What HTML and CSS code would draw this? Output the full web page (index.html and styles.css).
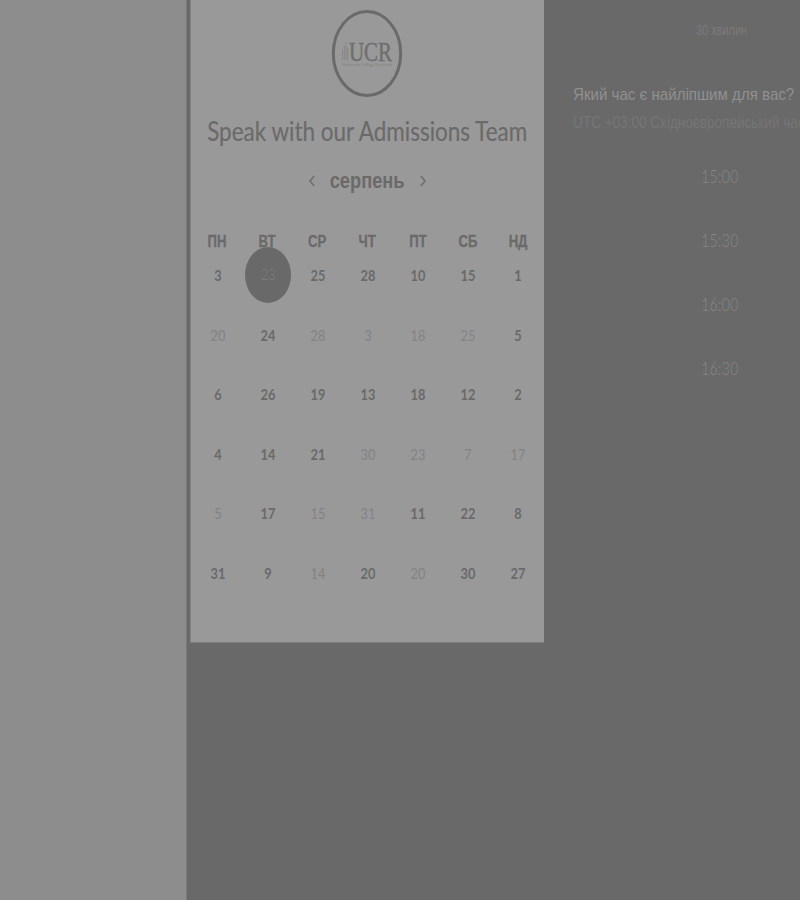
FILE: index.html
```html
<!DOCTYPE html>
<html lang="uk">
<head>
<meta charset="utf-8">
<title>Speak with our Admissions Team</title>
<link rel="stylesheet" href="styles.css">
</head>
<body>
<div class="page">
  <aside class="side"></aside>
  <main class="card">
    <svg class="logo" viewBox="0 0 72 88" width="72" height="88">
      <ellipse cx="36" cy="43.6" rx="33.7" ry="42" fill="none" stroke="#6a6a6a" stroke-width="3"/>
      <path d="M11.5 50V40M13.3 50V36M15 50V32M16.8 50V38" stroke="#868686" stroke-width="1"/>
      <text class="logo-name" x="18" y="50.5" textLength="43" lengthAdjust="spacingAndGlyphs">UCR</text>
      <text class="logo-sub" x="11" y="56" textLength="50" lengthAdjust="spacingAndGlyphs">University College Roosevelt</text>
    </svg>
    <h1 class="title"><span>Speak with our Admissions Team</span></h1>
    <div class="month">
      <svg class="arrow" viewBox="0 0 8 12" width="8" height="12"><path d="M6.2 1L2 6l4.2 5"/></svg>
      <span class="month-name"><span>серпень</span></span>
      <svg class="arrow" viewBox="0 0 8 12" width="8" height="12"><path d="M1.8 1L6 6l-4.2 5"/></svg>
    </div>
    <div class="week">
      <span>ПН</span><span>ВТ</span><span>СР</span><span>ЧТ</span><span>ПТ</span><span>СБ</span><span>НД</span>
    </div>
    <div class="days">
      <span>3</span><b class="picked"><span>23</span></b><span>25</span><span>28</span><span>10</span><span>15</span><span>1</span>
      <span class="off">20</span><span>24</span><span class="off">28</span><span class="off">3</span><span class="off">18</span><span class="off">25</span><span>5</span>
      <span>6</span><span>26</span><span>19</span><span>13</span><span>18</span><span>12</span><span>2</span>
      <span>4</span><span>14</span><span>21</span><span class="off">30</span><span class="off">23</span><span class="off">7</span><span class="off">17</span>
      <span class="off">5</span><span>17</span><span class="off">15</span><span class="off">31</span><span>11</span><span>22</span><span>8</span>
      <span>31</span><span>9</span><span class="off">14</span><span>20</span><span class="off">20</span><span>30</span><span>27</span>
    </div>
  </main>
  <section class="times">
    <p class="duration"><span>30 хвилин</span></p>
    <h2 class="question"><span>Який час є найліпшим для вас?</span></h2>
    <p class="zone"><span>UTC +03:00 Східноєвропейський час</span></p>
    <div class="slots">
      <span>15:00</span><span>15:30</span><span>16:00</span><span>16:30</span>
    </div>
  </section>
</div>
</body>
</html>
```
FILE: styles.css
```css
* { box-sizing: border-box; }
body { margin: 0; background: #696969; font-family: Lato, "Liberation Sans", sans-serif; }
h1, h2, p { margin: 0; font-weight: 400; }
.page { display: flex; width: 800px; height: 900px; overflow: hidden; }
.side { flex: none; width: 187px; background: #8d8d8d; border-right: 1px solid #7a7a7a; }
.card {
  flex: none; width: 354px; height: 643px; margin-left: 3px; margin-right: 0;
  background: #999; border-left: 1px solid #858585; border-bottom: 1px solid #7e7e7e;
  display: flex; flex-direction: column; align-items: center; color: #6a6a6a;
}
.logo { flex: none; margin: 10px 1.5px 0 0; }
.logo-name { font: 27px "Liberation Serif", serif; fill: #6e6e6e; stroke: #6e6e6e; stroke-width: .4; }
.logo-sub { font: 4px "Liberation Serif", serif; fill: #7c7c7c; }
.title { flex: none; height: 36px; margin-top: 15px; font-size: 26px; line-height: 36px; white-space: nowrap; -webkit-text-stroke: .15px #6a6a6a; }
.title span { display: inline-block; transform: scaleX(.864); }
.month { flex: none; display: flex; align-items: center; justify-content: space-between; width: 119px; height: 32px; margin-top: 16px; }
.arrow { fill: none; stroke: #707070; stroke-width: 1.7; }
.month-name { display: flex; justify-content: center; width: 76px; font: bold 22px/34px "Liberation Sans", sans-serif; }
.month-name span { transform: scaleX(.83); }
.week, .days { display: grid; grid-template-columns: repeat(7, 50.1px); flex: none; text-align: center; }
.week { height: 20px; margin-top: 35px; font: bold 16px/20px "Liberation Sans", sans-serif; -webkit-text-stroke: .3px #6a6a6a; }
.week span { transform: scaleX(.82); }
.days > span { transform: scaleX(.8); }
.days { grid-auto-rows: 59.6px; margin-left: 1.4px; font-weight: 700; font-size: 16px; line-height: 46.5px; }
.days .off { color: #838383; font-weight: 400; }
.picked {
  justify-self: center; width: 46px; height: 56px; margin-top: -5px; border-radius: 50%;
  background: #696969; color: #7e7e7e; font-weight: 300; line-height: 53px;
}
.picked span { display: inline-block; transform: scaleX(.78); }
.times { flex: none; width: 256px; padding-left: 29px; white-space: nowrap; font-family: "Liberation Sans", sans-serif; }
.times p span, .times h2 span { display: inline-block; transform-origin: left; }
.duration { height: 20px; margin: 20px 0 0 123px; font-size: 14px; line-height: 20px; color: #7b7b7b; }
.duration span { transform: scaleX(.78); }
.question { height: 24px; margin-top: 42px; font-size: 17px; line-height: 25px; color: #909090; }
.question span { transform: scaleX(.888); }
.zone { height: 20px; margin-top: 6px; font-size: 16px; line-height: 21px; color: #767676; }
.zone span { transform: scaleX(.848); }
.slots { display: grid; grid-auto-rows: 64px; margin-top: 13px; padding-left: 67px; text-align: center; font: 300 17px/64px Lato, sans-serif; letter-spacing: .5px; color: #888; }
.slots span { transform: scaleX(.82); }
```
